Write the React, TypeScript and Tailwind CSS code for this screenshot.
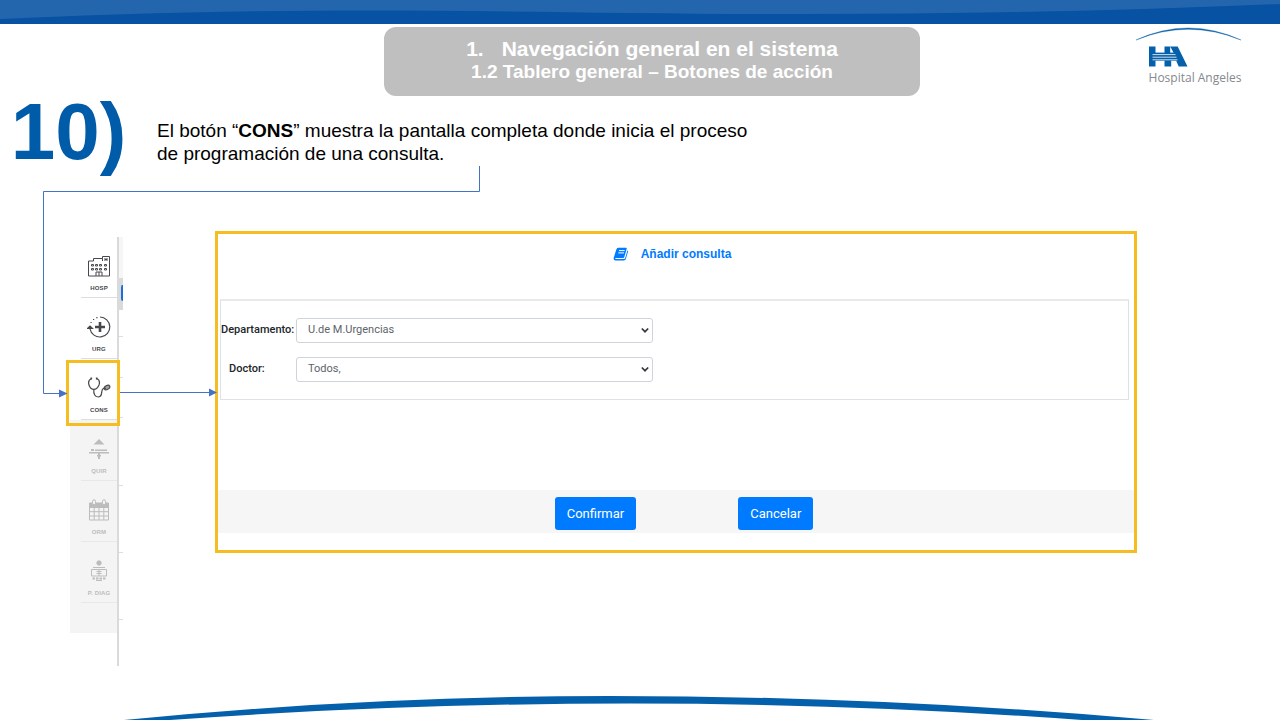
import type { ReactNode } from "react";

function TopBand() {
  return (
    <svg className="block h-6 w-full" viewBox="0 0 1280 24" preserveAspectRatio="none" aria-hidden="true">
      <rect width="1280" height="24" fill="#0752a3" />
      <path d="M0 0H1280V4C1120 11 960 14 800 14C640 14 500 10.4 370 10.4C230 10.6 110 14 0 19Z" fill="#2466ae" />
    </svg>
  );
}

function BottomArc() {
  return (
    <svg className="block h-6 w-full" viewBox="0 0 1280 24" preserveAspectRatio="none" aria-hidden="true">
      <path d="M124 24Q367 0 610 0Q882 0 1154 24H1082Q856 7.500 630 7.500Q400 7.500 170 24Z" fill="#0560ab" />
    </svg>
  );
}

function Logo() {
  return (
    <div className="flex w-[110px] flex-col items-center">
      <svg className="block h-10 w-[110px]" viewBox="0 0 110 40" aria-hidden="true">
        <path d="M2 13Q54-11 107 13Q54-8.500 2 13Z" fill="#0b62ad" stroke="#0b62ad" strokeWidth=".4" />
        <path d="M15 19.500h6.500v20H15zM30.500 19.500h13.200l9.800 20h-8.800l-4-9h-3.500v9h-6.700z" fill="#0560ab" />
        <path d="M36.200 19.500 40.500 27.500H36.200z" fill="#fff" />
        <path d="M19 25.600h23v8.200H19z" fill="#0560ab" />
        <path d="M18.500 27.600h23M18.500 30.200h24M18.500 32.800h25" stroke="#fff" strokeWidth=".8" />
      </svg>
      <span className="pt-px pl-3 font-['Open_Sans',sans-serif] text-[12px] leading-5 whitespace-nowrap text-[#85898d]">
        Hospital Angeles
      </span>
    </div>
  );
}

const iconBox = "block h-6 w-6";

function HospitalIcon() {
  return (
    <svg className={iconBox} viewBox="0 0 24 24" fill="none" stroke="currentColor" strokeWidth="1">
      <path d="M1.500 22V7h5V4.500h9V2.500h7V22zM15.500 4.500V7M9 22v-4h6v4M12 18v4" />
      <path d="M18 4v3M20 4v3M18 5.500h2" />
      <path d="M4.500 10.500h2v1.500h-2zM8.500 10.500h2v1.500h-2zM12.500 10.500h2v1.500h-2zM17.500 10.500h2v1.500h-2zM4.500 14.500h2v1.500h-2zM8.500 14.500h2v1.500h-2zM12.500 14.500h2v1.500h-2zM17.500 14.500h2v1.500h-2z" />
    </svg>
  );
}

function UrgentIcon() {
  return (
    <svg className={iconBox} viewBox="0 0 24 24" fill="none" stroke="currentColor" strokeWidth="1.200">
      <path d="M13 2a10 10 0 1 1-10 12" />
      <path d="M13 7v10M8 12h10" strokeWidth="2.600" />
      <path d="M.500 13.500 3 11l2.500 2.500z" fill="currentColor" />
      <path d="M3.500 7.500h1.200M6 4.500h1.200M9.300 2.700h1.200" />
    </svg>
  );
}

function StethoscopeIcon() {
  return (
    <svg className={iconBox} viewBox="0 0 24 24" fill="none" stroke="currentColor" strokeWidth="1.200">
      <path d="M4.500 2.500C1.500 4 1 6 2 9c.8 2.500 2.500 4.300 4.800 4.300S11 11.500 12 9c1-3 .2-5.500-2.500-6.500" />
      <path d="M4.300 1.600v1.800M9.700 1.600v1.800" strokeWidth="1.600" />
      <path d="M6.800 13.300c-.3 4.500.9 7.700 4.400 7.700 3.200 0 3.300-2.500 3.600-5.500.4-3 2.300-4 4.300-3" />
      <ellipse cx="20" cy="11.500" rx="3" ry="1.900" transform="rotate(-28 20 11.500)" fill="currentColor" fillOpacity=".5" />
    </svg>
  );
}

function OperatingIcon() {
  return (
    <svg className={iconBox} viewBox="0 0 24 24" fill="currentColor">
      <path d="M6.500 7.500 12 2l5.500 5.500zM2 15h20v1.600H2zM4 12h3v2H4zM8 12.500h12V14H8zM11 16.500h2V22h-2zM10 18h4v1.500h-4z" />
    </svg>
  );
}

function CalendarIcon() {
  return (
    <svg className={iconBox} viewBox="0 0 24 24" fill="none" stroke="currentColor" strokeWidth="1">
      <path d="M2.500 5h19v17h-19zM2.500 9.500h19M2.500 13.700h19M2.500 18h19M7.200 9v13M12 9v13M16.800 9v13" />
      <path d="M3 5.500h18v3H3z" fill="currentColor" />
      <rect x="5.500" y="1.800" width="3" height="5" rx="1.500" fill="#f4f4f4" />
      <rect x="15.500" y="1.800" width="3" height="5" rx="1.500" fill="#f4f4f4" />
    </svg>
  );
}

function DiagnosisIcon() {
  return (
    <svg className={iconBox} viewBox="0 0 24 24" fill="none" stroke="currentColor" strokeWidth="1">
      <circle cx="12" cy="4" r="2.200" fill="currentColor" />
      <path d="M6 8.500h12M4.500 10.500h15v6.500h-15zM12 10v7M9.500 12.500h5M9.500 14.500h5" />
      <path d="M5.500 19.500h13" strokeWidth="2" strokeDasharray="2.500 1" />
      <path d="M9 21.500h6" />
    </svg>
  );
}

type Item = { label: string; icon: ReactNode; enabled: boolean; active?: boolean };

const items: Item[] = [
  { label: "HOSP", icon: <HospitalIcon />, enabled: true },
  { label: "URG", icon: <UrgentIcon />, enabled: true },
  { label: "CONS", icon: <StethoscopeIcon />, enabled: true, active: true },
  { label: "QUIR", icon: <OperatingIcon />, enabled: false },
  { label: "ORM", icon: <CalendarIcon />, enabled: false },
  { label: "P. DIAG", icon: <DiagnosisIcon />, enabled: false },
];

function SideItem({ item }: { item: Item }) {
  return (
    <li className={item.enabled ? "relative pl-[11px]" : "relative bg-[#f4f4f4] pl-[11px]"}>
      <button
        type="button"
        disabled={!item.enabled}
        className={
          "flex h-[61px] w-full flex-col items-center border-b pt-[17px] " +
          (item.enabled ? "border-[#dddddd] text-[#48484c]" : "border-[#e8e8e8] text-[#bcbcbc]")
        }
      >
        {item.icon}
        <span className="mt-1 font-['Liberation_Sans',sans-serif] text-[6px] leading-3 font-bold tracking-wide whitespace-nowrap">
          {item.label}
        </span>
      </button>
      {item.active && (
        <span className="pointer-events-none absolute top-px -right-[3px] -bottom-[6px] -left-1 z-10 border-3 border-[#f5bd22]" />
      )}
    </li>
  );
}

function Sidebar() {
  return (
    <nav className="mt-1.5 flex h-[429px] w-[53px] shrink-0" aria-label="Acciones">
      <ul className="flex w-[47px] flex-col">
        {items.map((item) => (
          <SideItem key={item.label} item={item} />
        ))}
        <li className="h-[30px] bg-[#f4f4f4]" />
      </ul>
      <svg className="block h-[429px] w-[6px]" viewBox="0 0 6 429" aria-hidden="true">
        <rect x="2" width="4" height="41" fill="#f6f6f6" />
        <rect x="2" y="41" width="4" height="32" fill="#d9dada" />
        <path d="M6 48H5Q4 48 4 51V62Q4 64 6 64Z" fill="#1a6fd8" />
        <rect width="2" height="429" fill="#dadada" />
        <path d="M2 99.500h4M2 140.500h4M2 180.500h4M2 248.500h4M2 315.500h4M2 382.500h4" stroke="#dedede" />
      </svg>
    </nav>
  );
}

function BookIcon() {
  return (
    <svg className="block h-3.5 w-4" viewBox="0 0 16 14" aria-hidden="true">
      <path d="M5.200 .8H13Q14 .8 13.700 1.800L11.300 10Q11 11 10 11H3.300Q2 11.200 2.200 12H11Q11.900 12 12.200 11L14.500 3.300Q15.300 3.800 15 4.700L12.800 12Q12.400 13.400 11 13.400H2.500Q.5 13.200.6 11.200L3.300 2.500Q3.900 1 5.200.8Z" fill="#007bff" />
      <path d="M6 3.600h5.700M5.300 5.900H11" stroke="#fff" strokeWidth="1" />
    </svg>
  );
}

function SelectRow({ id, label, value }: { id: string; label: string; value: string }) {
  return (
    <div className="grid grid-cols-[75px_357px] items-center">
      <label
        htmlFor={id}
        className={
          "text-[11px] font-medium whitespace-nowrap text-[#212529] " + (label.length > 8 ? "" : "pl-2")
        }
      >
        {label}
      </label>
      <div className="relative">
        <select
          id={id}
          className="block h-[25px] w-full appearance-none rounded-[3px] border border-[#ced4da] bg-white pl-[11px] text-[11px] text-[#5c636a]"
        >
          <option>{value}</option>
        </select>
        <svg className="pointer-events-none absolute top-2 right-1 h-2 w-2" viewBox="0 0 8 8" fill="none" stroke="#343a40" strokeWidth="1.700" aria-hidden="true">
          <path d="M.8 2.500 4 5.700 7.200 2.500" />
        </svg>
      </div>
    </div>
  );
}

function ConsultaPanel() {
  return (
    <form className="mr-[143px] ml-[92px] flex min-w-0 flex-1 flex-col self-start border-3 border-[#f5bd22] bg-white font-[Roboto,sans-serif]">
      <h2 className="mt-2.5 flex items-center justify-center gap-3 pr-2 font-['Liberation_Sans',sans-serif] text-[12px] leading-5 font-bold text-[#007bff]">
        <BookIcon />
        Añadir consulta
      </h2>
      <div className="mt-[35px] mr-[5px] ml-0.5 flex h-[101px] flex-col gap-3.5 border border-t-2 border-[#dee2e6] border-t-[#e9e9e9] pt-[17px]">
        <SelectRow id="departamento" label="Departamento:" value="U.de M.Urgencias" />
        <SelectRow id="doctor" label="Doctor:" value="Todos," />
      </div>
      <div className="mt-[90px] mb-[17px] flex h-[43px] items-center justify-center gap-[102px] bg-[#f6f6f6] pt-1 pl-4">
        <button type="button" className="h-[33px] rounded-[3px] bg-[#007bff] px-3 text-[13px] text-white">
          Confirmar
        </button>
        <button type="button" className="h-[33px] rounded-[3px] bg-[#007bff] px-3 text-[13px] text-white">
          Cancelar
        </button>
      </div>
    </form>
  );
}

function Connectors() {
  return (
    <svg className="pointer-events-none absolute top-0 left-0 z-20 h-[310px] w-[500px]" viewBox="0 0 500 310" fill="none" stroke="#4472c4" aria-hidden="true">
      <path d="M479.500 70V95.500H43.500V297.500H60M120 296.500H210" />
      <path d="M59 293.500 67.500 297.500 59 301.500ZM209 292.500 217 296.500 209 300.500Z" fill="#4472c4" stroke="none" />
    </svg>
  );
}

export default function App() {
  return (
    <div className="flex min-h-screen flex-col bg-white font-['Liberation_Sans',sans-serif]">
      <TopBand />
      <header className="flex items-start pt-[3px]">
        <div className="flex-1 pl-9" />
        <h1 className="ml-6 h-[69px] w-[536px] rounded-xl bg-[#bfbfbf] pt-2.5 text-center font-bold text-white">
          <span className="block text-[21px] leading-6">
            1.<span className="ml-[18px]">Navegación general en el sistema</span>
          </span>
          <span className="block text-[19px] leading-[22px]">1.2 Tablero general – Botones de acción</span>
        </h1>
        <div className="flex flex-1 justify-end pr-9">
          <Logo />
        </div>
      </header>
      <div className="relative">
        <Connectors />
        <section className="flex h-[72px]">
          <span className="w-[145px] shrink-0 pr-2 text-center text-[80px] leading-[72px] font-bold text-[#005ba9]">10)</span>
          <p className="ml-3 pt-[23px] text-[19px] leading-[23px] text-black">
            El botón “<strong>CONS</strong>” muestra la pantalla completa donde inicia el proceso
            <br />
            de programación de una consulta.
          </p>
        </section>
        <div className="mt-[63px] flex items-start pl-[70px]">
          <Sidebar />
          <ConsultaPanel />
        </div>
      </div>
      <footer className="mt-auto">
        <BottomArc />
      </footer>
    </div>
  );
}
